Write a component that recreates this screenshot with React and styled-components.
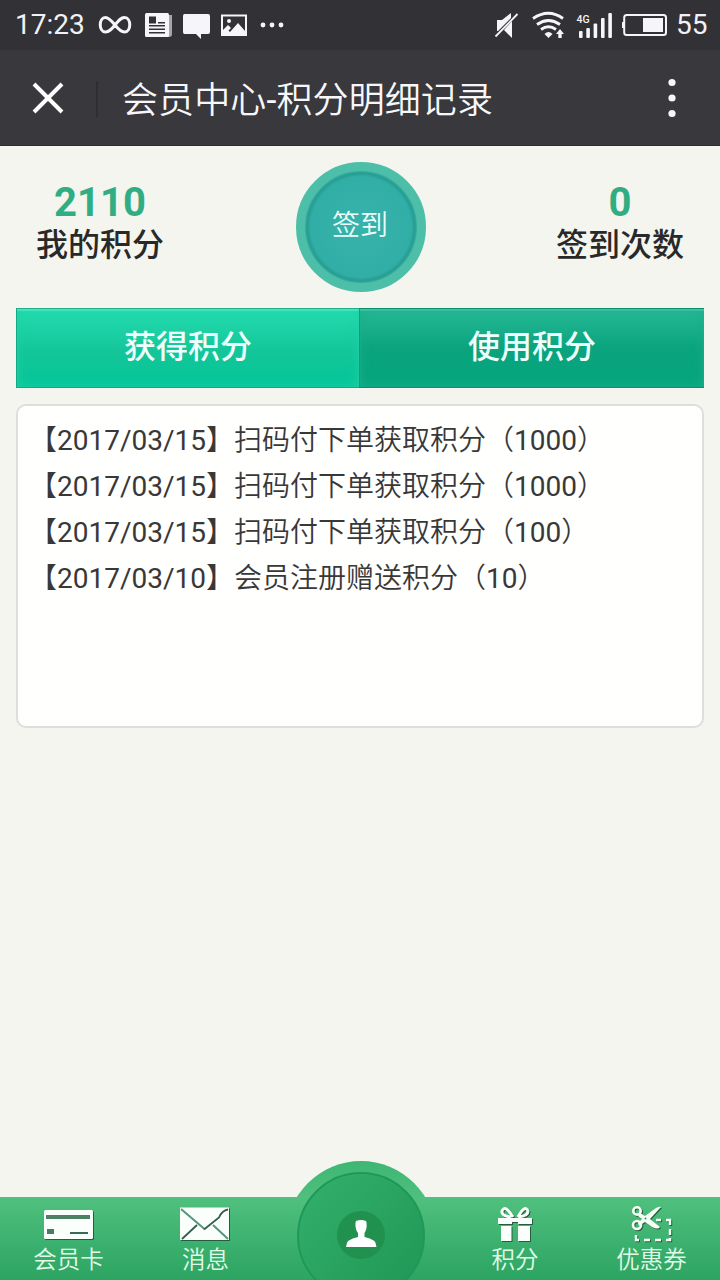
import React from 'react'
import styled, { createGlobalStyle } from 'styled-components'

const GlobalStyle = createGlobalStyle`
  * { box-sizing: border-box; }
  body {
    margin: 0;
    background: #f3f5ee;
    font-family: Roboto, "Noto Sans CJK SC", sans-serif;
  }
`

const Page = styled.div`
  display: flex;
  flex-direction: column;
  width: 720px;
  height: 1280px;
  overflow: hidden;
  background: #f3f5ee;
`

const StatusBar = styled.div`
  display: flex;
  justify-content: space-between;
  height: 50px;
  background: #323135;
`

const StatusText = styled.span`
  width: ${props => props.$width};
  padding-left: ${props => props.$left};
  color: #f2f2f6;
  font-size: 28px;
  font-weight: 400;
  line-height: 50px;
  white-space: nowrap;
`

const StatusSide = styled.div`
  display: flex;
`

const TitleBar = styled.div`
  display: flex;
  align-items: center;
  height: 96px;
  padding: 0 42px 0 32px;
  background: #39383d;
  border-bottom: 1px solid #2e2d31;
`

const Divider = styled.div`
  width: 2px;
  height: 36px;
  margin: 3px 24px 0 32px;
  background: #2f2e33;
`

const Title = styled.h1`
  flex: 1;
  margin: 0;
  padding-top: 6px;
  color: #f7f7fa;
  font-size: 36px;
  font-weight: 350;
  letter-spacing: 0.1px;
  line-height: 50px;
`

const Summary = styled.div`
  display: flex;
  justify-content: space-between;
  height: 162px;
  padding-top: 16px;
`

const Stat = styled.div`
  width: 200px;
  padding-top: 17px;
  text-align: center;
`

const StatNumber = styled.div`
  color: #31ad83;
  font-size: 40px;
  font-weight: 700;
  line-height: 48px;
`

const StatLabel = styled.div`
  color: #292929;
  font-size: 32px;
  font-weight: 500;
  line-height: 36px;
`

const SignButton = styled.button`
  width: 130px;
  height: 130px;
  margin: 0 0 0 2px;
  padding: 0 2px 3px 0;
  border: 9px solid #4dbea8;
  border-radius: 50%;
  background: radial-gradient(circle closest-side, #37b3ab 0, #31aea5 90%, #269c93 96%, #39afa0 100%);
  color: #eefffc;
  font-family: inherit;
  font-size: 28px;
  font-weight: 350;
  line-height: 100px;
`

const Tabs = styled.div`
  display: flex;
  height: 80px;
  margin: 0 16px;
`

const Tab = styled.div`
  width: ${props => (props.$active ? '343px' : '345px')};
  border-top: 1px solid ${props => (props.$active ? '#22ae8b' : '#07906e')};
  border-bottom: 1px solid ${props => (props.$active ? '#12a983' : '#08936f')};
  border-left: 1px solid ${props => (props.$active ? '#12a983' : '#189a78')};
  background: ${props => props.$active
    ? 'linear-gradient(#24dcb0, #13c699 55%, #03c598)'
    : 'linear-gradient(#27b996, #0aa47e 50%, #04a57d)'};
  box-shadow: inset 0 2px 1px ${props => (props.$active ? '#43e4bd' : '#42bea0')},
    inset 0 0 12px ${props => (props.$active ? '#1ed0a4' : '#1aac87')};
  color: #effffb;
  font-size: 32px;
  font-weight: 500;
  line-height: 76px;
  text-align: center;
`

const Records = styled.div`
  height: 324px;
  margin: 16px 16px 0;
  padding: 12px 11px;
  border: 2px solid #dedfdd;
  border-radius: 10px;
  background: #fffffe;
`

const Record = styled.div`
  color: #383838;
  font-size: 28px;
  font-weight: 350;
  line-height: 46px;
  white-space: nowrap;
`

const Digits = styled.span`
  font-weight: 400;
`

const Nav = styled.nav`
  position: relative;
  display: grid;
  grid-template-columns: 137px 137px 173px 136px 137px;
  height: 83px;
  margin-top: auto;
  background: linear-gradient(#50c07e, #2ca462);
`

const NavItem = styled.a`
  display: flex;
  flex-direction: column;
  align-items: center;
  padding-top: 4px;
  color: #e2fbe7;
  font-size: 23.5px;
  font-weight: 350;
  line-height: 34px;

  svg {
    filter: drop-shadow(1px 1px 0 #285c41);
  }
`

const MemberButton = styled.div`
  position: absolute;
  top: -36px;
  left: 286px;
  width: 150px;
  height: 119px;
  overflow: hidden;
`

const records = [
  { date: '2017/03/15', text: '扫码付下单获取积分', points: 1000 },
  { date: '2017/03/15', text: '扫码付下单获取积分', points: 1000 },
  { date: '2017/03/15', text: '扫码付下单获取积分', points: 100 },
  { date: '2017/03/10', text: '会员注册赠送积分', points: 10 },
]

const NoticeIcons = () => (
  <svg width="200" height="50" viewBox="90 0 200 50" fill="#f6f6fa">
    <path d="M115 25 C110 19 108 17.500 105.500 17.500 C98.500 17.500 98.500 32 105.500 32 C109 32 111 30 115 25 C119 20 121 17.500 124.500 17.500 C131.500 17.500 131.500 32 124.500 32 C121.500 32 119 30 115 25" fill="none" stroke="#f6f6fa" strokeWidth="3" />
    <path d="M168 15h4v19q0 3-3 3h-15z" fill="#a6a6ab" />
    <rect x="145" y="13" width="24" height="24" rx="1.500" />
    <path d="M149 16.500h7v7h-7zM158 22h7v1.500h-7zM149 25h16v1.500h-16zM149 28.500h16V30h-16zM149 32h16v1.500h-16z" fill="#323135" />
    <path d="M184.500 14H208q2 0 2 2v16q0 2-2 2h-7v5l-5-5h-11.500q-1.500 0-1.500-2V16q0-2 1.500-2z" />
    <path d="M221 14.500h26V36h-26z" />
    <path d="M223 16.500h22V31l-7-8-8 9-3-3-4 4z" fill="#323135" />
    <circle cx="229" cy="21" r="2" />
    <path d="M223 30l5-5 3 3-5 5h-3z" />
    <circle cx="263" cy="25" r="2.400" /><circle cx="272" cy="25" r="2.400" /><circle cx="281" cy="25" r="2.400" />
  </svg>
)

const SignalIcons = () => (
  <svg width="180" height="50" viewBox="490 0 180 50" fill="#f6f6fa">
    <path d="M497 20h5l9-7v5l-13 13h-1zM512 21v17l-8-8z" />
    <path d="M495.500 36.500L517.500 14" stroke="#f6f6fa" strokeWidth="1.800" />
    <g fill="none" stroke="#f6f6fa" strokeWidth="2.800">
      <path d="M533 18.500Q548.500 8 563 18.500" />
      <path d="M537 24.500Q548.500 16.500 560 24.500" />
      <path d="M541 29.500Q548.500 24 556 29.500" />
    </g>
    <path d="M544.500 34q4-4 8 0l-4 4zM560 29l4 5h-2.300v4h-3.400v-4H556z" />
    <text x="576.500" y="22.500" fontFamily="Roboto" fontSize="10.500" fontWeight="500">4G</text>
    <rect x="579" y="31" width="3.600" height="7" rx="1" />
    <rect x="586.300" y="28" width="3.600" height="10" rx="1" />
    <rect x="593.600" y="23.500" width="3.600" height="14.500" rx="1" />
    <rect x="601" y="18" width="3.600" height="20" rx="1" />
    <rect x="608.300" y="13" width="3.600" height="25" rx="1" />
    <rect x="624.200" y="15" width="41.800" height="20" rx="2.500" fill="none" stroke="#f6f6fa" strokeWidth="2" />
    <path d="M622 22h2v6h-2zM643 18h20v14h-20z" />
  </svg>
)

const CloseIcon = () => (
  <svg width="32" height="32" viewBox="0 0 32 32">
    <path d="M2 2l28 28M30 2L2 30" stroke="#fff" strokeWidth="4" />
  </svg>
)

const MoreIcon = () => (
  <svg width="12" height="40" viewBox="0 0 12 40" fill="#f7f7fa">
    <circle cx="6" cy="4.500" r="3.600" />
    <circle cx="6" cy="20" r="3.600" />
    <circle cx="6" cy="35.500" r="3.600" />
  </svg>
)

const CardIcon = () => (
  <svg width="52" height="42" viewBox="43 1201 52 42">
    <rect x="44" y="1210" width="49" height="29" rx="1.500" fill="#fbfffb" />
    <path d="M46 1215h44v4H46z" fill="#4b8062" />
    <path d="M47 1229h7v5h-7z" fill="#467f60" />
    <path d="M70 1232h18v2H70z" fill="#386b50" />
  </svg>
)

const MailIcon = () => (
  <svg width="52" height="42" viewBox="180 1201 52 42">
    <rect x="180" y="1207.500" width="49" height="32.500" fill="#fbfffb" />
    <path d="M181 1209l23.500 20M213 1225l15 14" fill="none" stroke="#52977a" strokeWidth="2" />
    <path d="M204 1229.500l15-12q3-7 9-8M197 1225l-15 14" fill="none" stroke="#365c4d" strokeWidth="1.800" />
  </svg>
)

const GiftIcon = () => (
  <svg width="52" height="42" viewBox="489 1201 52 42" fill="#fbfffb">
    <path d="M498 1218h34v6h-14v-2h-6v2h-14zM501 1226h10.500v15H501zM518 1226h12v15h-12z" />
    <path d="M511 1217q-10-1-9-6 3-7 11 6M518 1217q10-1 10-6-3-7-10 6" fill="none" stroke="#fbfffb" strokeWidth="3" />
  </svg>
)

const CouponIcon = () => (
  <svg width="52" height="42" viewBox="626 1201 52 42" fill="none" stroke="#f5fff5">
    <path d="M656 1220h5m5 0h4v5m0 4v6m0 3v2h-4m-5 0h-6m-5 0h-6m-5 0h-3v-5" strokeWidth="2.400" />
    <circle cx="637" cy="1211" r="3.700" strokeWidth="2.600" />
    <circle cx="637" cy="1225" r="4" strokeWidth="2.600" />
    <path d="M640 1213l5 3 11-8q4-2 5-1l-11 12 10 8q-2 3-8 0l-7-5-6 4-1-3 4-4-4-3z" fill="#f5fff5" stroke="none" />
    <circle cx="645.500" cy="1218.500" r="1" fill="#42895f" stroke="none" />
  </svg>
)

// the ring melts into the bar below its top edge
const MemberIcon = () => (
  <svg width="150" height="119" viewBox="0 0 150 119">
    <defs>
      <linearGradient id="ring" x1="0" y1="0" x2="0" y2="36" gradientUnits="userSpaceOnUse">
        <stop offset="0" stopColor="#3eb673" />
        <stop offset="1" stopColor="#4fbf7e" />
      </linearGradient>
      <linearGradient id="disc" x1="0" y1="0" x2="1" y2="1">
        <stop offset="0" stopColor="#35b06c" />
        <stop offset="1" stopColor="#1e9655" />
      </linearGradient>
      <clipPath id="cap"><rect width="150" height="36" /></clipPath>
    </defs>
    <circle cx="75" cy="75" r="75" fill="url(#ring)" clipPath="url(#cap)" />
    <circle cx="75" cy="75" r="63" fill="url(#disc)" stroke="#1f9958" strokeWidth="2" />
    <circle cx="75" cy="74" r="24" fill="#20914f" />
    <path d="M70 60q5-2 10 0 1 2 .500 7-1 4-2 5v4q12 2 12 10H60q0-8 12-10v-4q-2-2-2.500-7-.500-3 .500-5z" fill="#fff" />
  </svg>
)

const App = () => (
  <Page lang="zh-CN">
    <GlobalStyle />

    <StatusBar>
      <StatusSide>
        <StatusText $width="90px" $left="15px">17:23</StatusText>
        <NoticeIcons />
      </StatusSide>
      <StatusSide>
        <SignalIcons />
        <StatusText $width="50px" $left="6px">55</StatusText>
      </StatusSide>
    </StatusBar>

    <TitleBar>
      <CloseIcon />
      <Divider />
      <Title>会员中心<Digits>-</Digits>积分明细记录</Title>
      <MoreIcon />
    </TitleBar>

    <Summary>
      <Stat>
        <StatNumber>2110</StatNumber>
        <StatLabel>我的积分</StatLabel>
      </Stat>
      <SignButton>签到</SignButton>
      <Stat>
        <StatNumber>0</StatNumber>
        <StatLabel>签到次数</StatLabel>
      </Stat>
    </Summary>

    <Tabs>
      <Tab $active>获得积分</Tab>
      <Tab>使用积分</Tab>
    </Tabs>

    <Records>
      {records.map((item, i) => (
        <Record key={i}>
          【<Digits>{item.date}</Digits>】{item.text}（<Digits>{item.points}</Digits>）
        </Record>
      ))}
    </Records>

    <Nav>
      <NavItem><CardIcon />会员卡</NavItem>
      <NavItem><MailIcon />消息</NavItem>
      <span />
      <NavItem><GiftIcon />积分</NavItem>
      <NavItem><CouponIcon />优惠券</NavItem>
      <MemberButton><MemberIcon /></MemberButton>
    </Nav>
  </Page>
)

export default App
